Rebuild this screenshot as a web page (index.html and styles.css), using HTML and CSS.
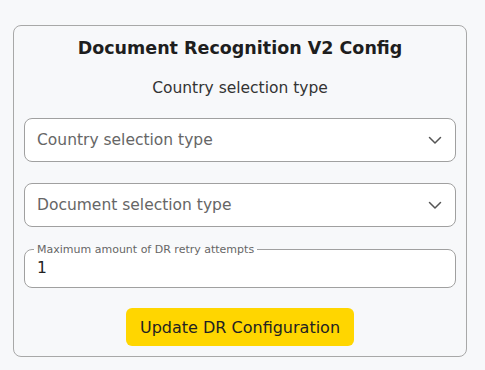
FILE: index.html
```html
<!DOCTYPE html>
<html lang="en">
<head>
    <meta charset="UTF-8">
    <meta name="viewport" content="width=device-width, initial-scale=1.0">
    <title>DR Config</title>
    <link rel="stylesheet" href="styles.css">
</head>
<body>

<div class="card">
    <h1>Document Recognition V2 Config</h1>
    <p class="subtitle">Country selection type</p>

    <div class="select">
        <span>Country selection type</span>
        <svg width="16" height="16" viewBox="0 0 16 16"><path d="M2.5 5.5 L8 11 L13.5 5.5" fill="none" stroke="#555" stroke-width="1.5" stroke-linecap="round" stroke-linejoin="round"/></svg>
    </div>

    <div class="select">
        <span>Document selection type</span>
        <svg width="16" height="16" viewBox="0 0 16 16"><path d="M2.5 5.5 L8 11 L13.5 5.5" fill="none" stroke="#555" stroke-width="1.5" stroke-linecap="round" stroke-linejoin="round"/></svg>
    </div>

    <fieldset class="field">
        <legend>Maximum amount of DR retry attempts</legend>
        <div class="value">1</div>
    </fieldset>

    <div class="actions">
        <button>Update DR Configuration</button>
    </div>
</div>

</body>
</html>
```

FILE: styles.css
```css
body {
    background-color: #f7f8fa;
    font-family: "DejaVu Sans", sans-serif;
    margin: 0;
    padding: 25px 18px 0 13px;
}
.card {
    border: 1px solid #a8a8a8;
    border-radius: 8px;
    padding: 10px 10px 10px 10px;
}
h1 {
    font-size: 17.5px;
    font-weight: bold;
    color: #1e1e1e;
    text-align: center;
    margin: 0;
    line-height: 24px;
}
.subtitle {
    font-size: 15.5px;
    color: #333;
    text-align: center;
    margin: 18px 0 20px 0;
    line-height: 20px;
}
.select {
    display: flex;
    justify-content: space-between;
    align-items: center;
    background-color: white;
    border: 1px solid #a0a0a0;
    border-radius: 8px;
    height: 42px;
    padding: 0 12px;
    margin-bottom: 21px;
    font-size: 15.5px;
    color: #666;
}
.field {
    background-color: white;
    border: 1px solid #a0a0a0;
    border-radius: 8px;
    margin: -5px 0 0 0;
    padding: 0 12px 9px 12px;
}
.field legend {
    font-size: 11px;
    line-height: 13px;
    color: #666;
    padding: 0 3px;
    margin-left: -3px;
}
.value {
    font-size: 15.5px;
    line-height: 20px;
    margin-top: 2px;
    color: #222;
}
.actions {
    text-align: center;
    margin-top: 20px;
}
button {
    background-color: #ffd600;
    border: none;
    border-radius: 6px;
    font-family: "DejaVu Sans", sans-serif;
    font-size: 16px;
    color: #222;
    padding: 0 14px;
    height: 38px;
}
```
